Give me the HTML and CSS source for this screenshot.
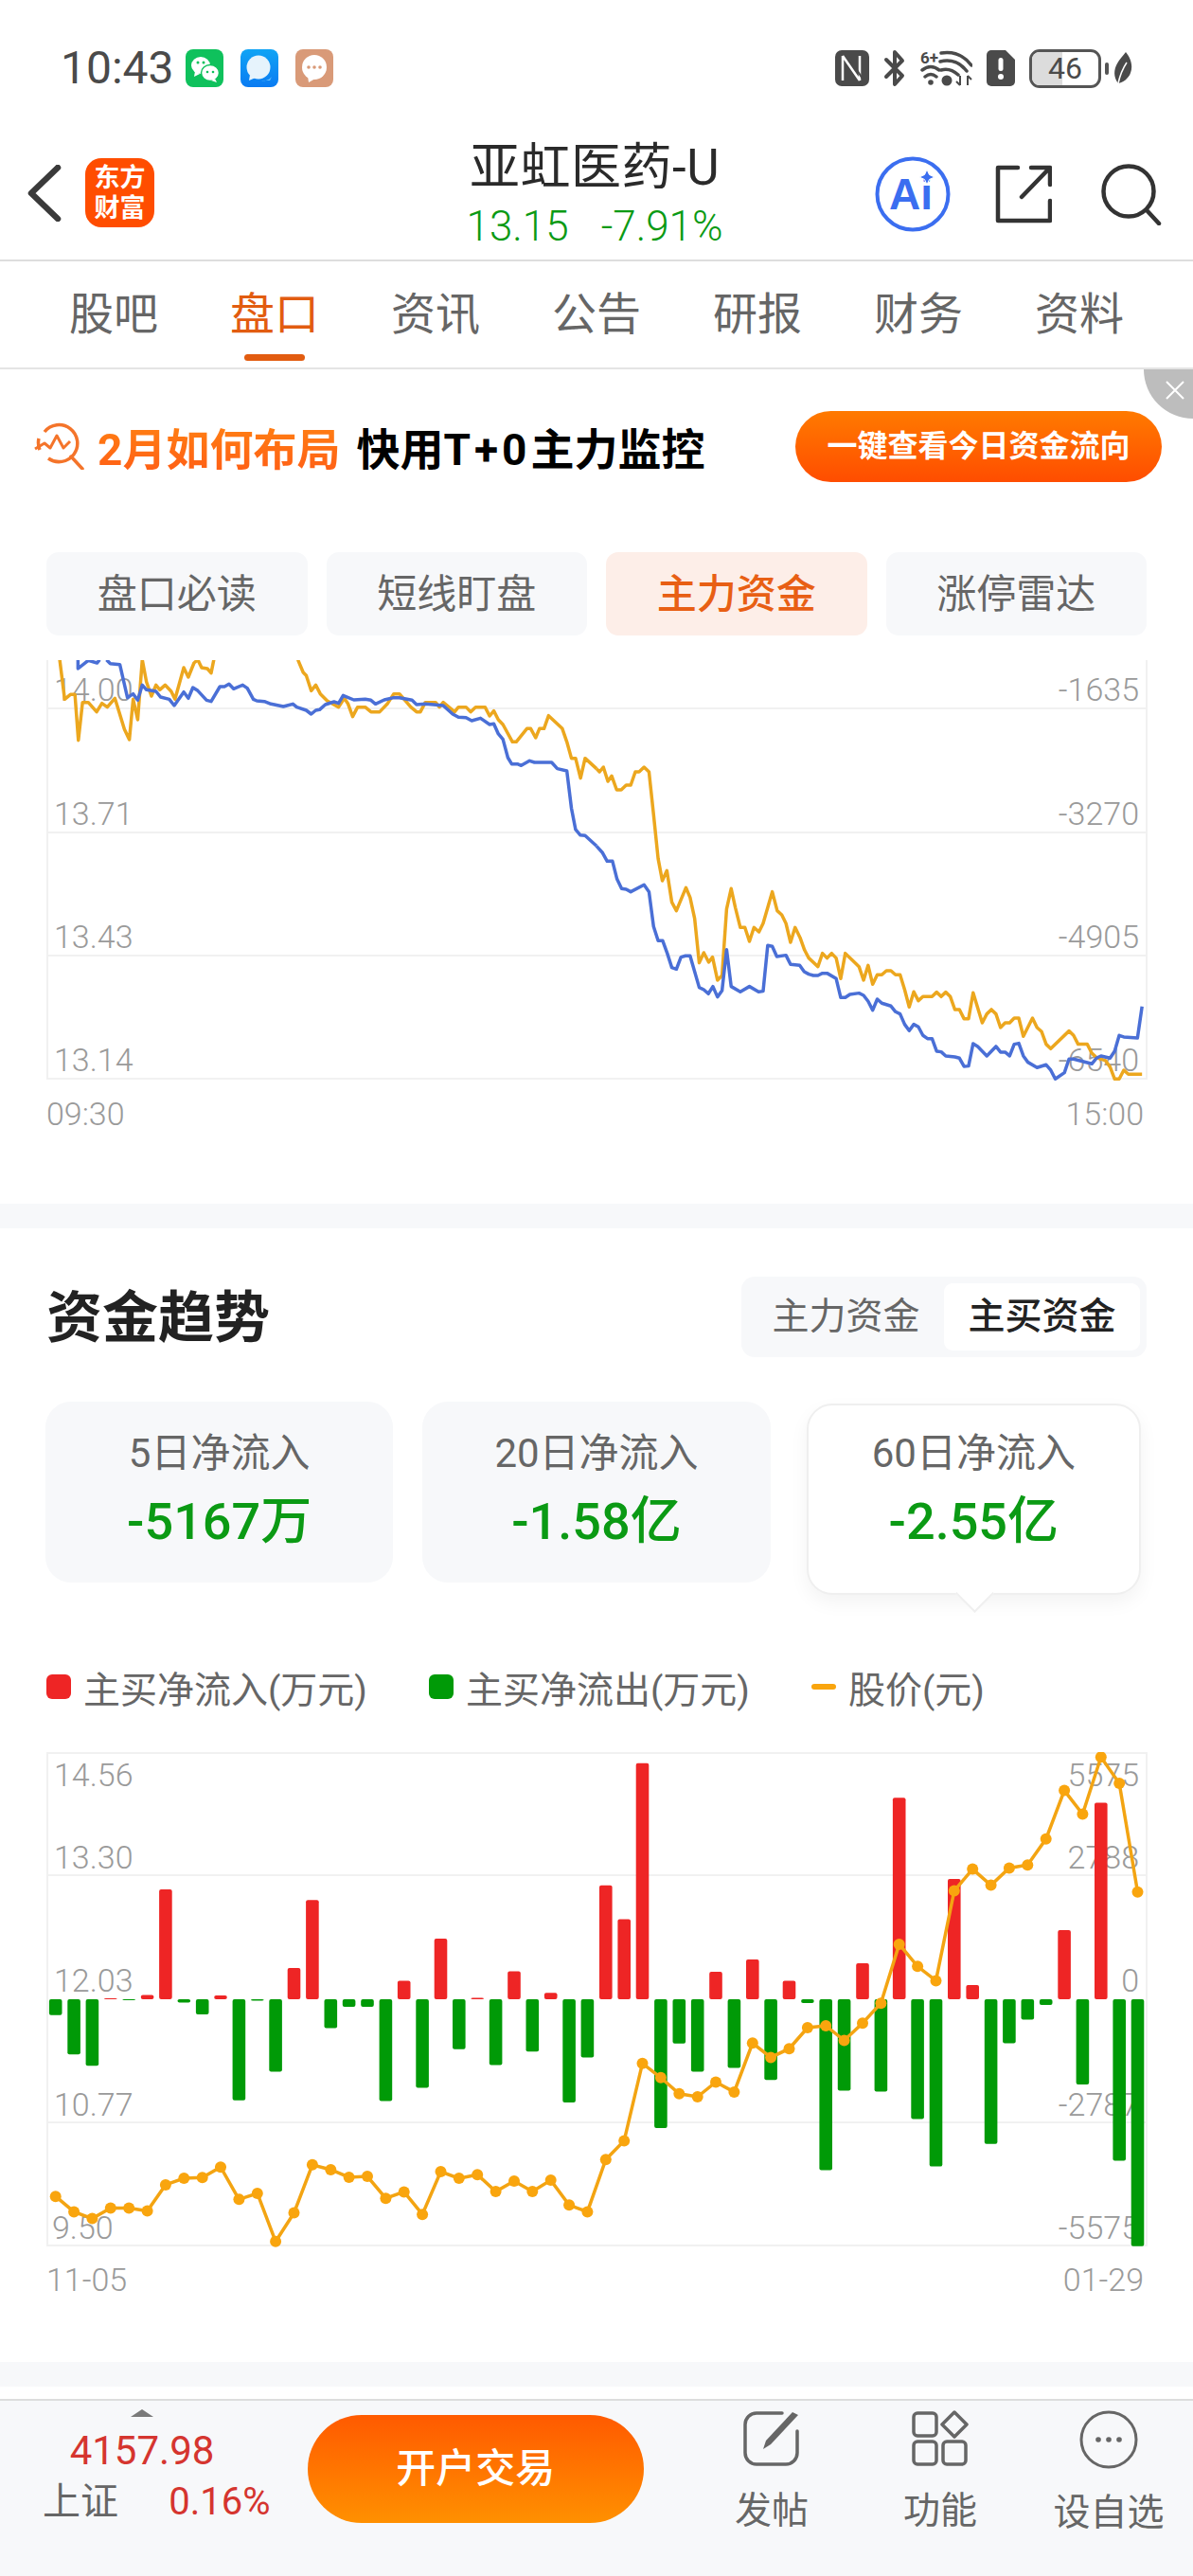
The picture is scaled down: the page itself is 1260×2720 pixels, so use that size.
FILE: index.html
```html
<!DOCTYPE html>
<html lang="zh-CN">
<head>
    <meta charset="UTF-8">
    <meta name="viewport" content="width=device-width, initial-scale=1.0">
    <title>亚虹医药-U</title>
    <link rel="stylesheet" href="styles.css">
</head>
<body>
    <div class="status">
        <div class="status-left">
            <span class="time">10:43</span>
            <svg class="app-icon" width="40" height="40" viewBox="0 0 40 40">
                <rect width="40" height="40" rx="8" fill="#0fc15c"/>
                <ellipse cx="16" cy="17" rx="10" ry="9" fill="#fff"/>
                <path d="M10 23l-1 6 6-3z" fill="#fff"/>
                <ellipse cx="26" cy="25" rx="9.500" ry="8.500" fill="#fff" stroke="#0fc15c" stroke-width="1.500"/>
                <path d="M31 31l2 4-6-2z" fill="#fff"/>
                <circle cx="13" cy="14" r="1.500" fill="#0fc15c"/><circle cx="19" cy="14" r="1.500" fill="#0fc15c"/>
                <circle cx="23" cy="24" r="1.300" fill="#0fc15c"/><circle cx="29" cy="24" r="1.300" fill="#0fc15c"/>
            </svg>
            <svg class="app-icon" width="40" height="40" viewBox="0 0 40 40">
                <defs><linearGradient id="msgBlue" x1="0" y1="0" x2="0" y2="1"><stop offset="0" stop-color="#10a4f5"/><stop offset="1" stop-color="#0a7bf2"/></linearGradient></defs>
                <rect width="40" height="40" rx="8" fill="url(#msgBlue)"/>
                <path d="M34 27c-2 5-7 7-12 6l9 0z" fill="#6cc4fa"/>
                <circle cx="19" cy="19" r="12.500" fill="#e6f3fc"/>
                <path d="M10 27l-1 6 7-3z" fill="#e6f3fc"/>
            </svg>
            <svg class="app-icon" width="40" height="40" viewBox="0 0 40 40">
                <rect width="40" height="40" rx="8" fill="#d99a78"/>
                <circle cx="20" cy="19" r="13" fill="#fff"/>
                <path d="M13 28l1 7 7-4z" fill="#fff"/>
                <circle cx="14" cy="19" r="1.800" fill="#d99a78"/><circle cx="20" cy="19" r="1.800" fill="#d99a78"/><circle cx="26" cy="19" r="1.800" fill="#d99a78"/>
            </svg>
        </div>
        <div class="status-right">
            <svg width="36" height="38" viewBox="0 0 36 38">
                <rect width="36" height="38" rx="7" fill="#4a4a4a"/>
                <path d="M8 6V32M8 6L26 32M26 32V6" fill="none" stroke="#fff" stroke-width="2.500"/>
                <path d="M14 6L30 32" fill="none" stroke="#4a4a4a" stroke-width="2"/>
            </svg>
            <svg width="24" height="40" viewBox="0 0 24 40">
                <path d="M3 11L20 28L12 37V3L20 12L3 29" fill="none" stroke="#4a4a4a" stroke-width="4" stroke-linejoin="round" stroke-linecap="round"/>
            </svg>
            <svg width="55" height="40" viewBox="0 0 55 40">
                <text class="wifi-six" x="0" y="15">6+</text>
                <path d="M22 4Q42 1 54 17M21 13Q38 9 49 23M22 22Q31 19 40 27M2 22Q11 15 20 22M5 29Q11 24 17 29" fill="none" stroke="#4a4a4a" stroke-width="3.500" stroke-linecap="round"/>
                <circle cx="11" cy="35" r="2.800" fill="#4a4a4a"/>
                <circle cx="28" cy="33" r="5.500" fill="#4a4a4a"/>
                <path d="M42 28V38M38 34L42 38M50 38V28M50 28L54 32" fill="none" stroke="#4a4a4a" stroke-width="2"/>
            </svg>
            <svg width="30" height="38" viewBox="0 0 30 38">
                <path d="M5 0H20L30 10V33a5 5 0 0 1-5 5H5a5 5 0 0 1-5-5V5a5 5 0 0 1 5-5z" fill="#4a4a4a"/>
                <rect x="12.500" y="8" width="5" height="14" rx="2.500" fill="#fff"/>
                <circle cx="15" cy="28" r="3" fill="#fff"/>
            </svg>
            <div class="battery">
                <div class="battery-body">
                    <div class="battery-fill"></div>
                    <span class="battery-num">46</span>
                </div>
                <div class="battery-tip"></div>
            </div>
            <svg width="20" height="34" viewBox="0 0 20 34">
                <path d="M13 0C18 6 21 14 18 22C16 28 10 32 5 33C0 27 0 19 4 12C6 8 10 4 13 0z" fill="#4a4a4a"/>
                <path d="M5 33C7 24 10 17 14 11" fill="none" stroke="#fff" stroke-width="1.500"/>
            </svg>
        </div>
    </div>

    <div class="nav">
        <div class="nav-left">
            <svg width="36" height="60" viewBox="0 0 36 60">
                <path d="M32 3L4 30L32 57" fill="none" stroke="#3a3a3a" stroke-width="6.500" stroke-linecap="round" stroke-linejoin="round"/>
            </svg>
            <div class="logo">东方<br>财富</div>
        </div>
        <div class="nav-title">
            <div class="stock-name">亚虹医药-U</div>
            <div class="stock-price"><span>13.15</span><span>-7.91%</span></div>
        </div>
        <div class="nav-right">
            <svg width="80" height="80" viewBox="0 0 80 80">
                <circle cx="40" cy="40" r="37.500" fill="none" stroke="#3b6ef0" stroke-width="4"/>
                <text class="ai-text" x="15" y="56">Ai</text>
                <path d="M55 14l2.500 5.500 5.500 2.500-5.500 2.500-2.500 5.500-2.500-5.500-5.500-2.500 5.500-2.500z" fill="#3b6ef0" stroke="#fff" stroke-width="1"/>
            </svg>
            <svg class="share" width="60" height="62" viewBox="0 0 60 62">
                <path d="M24 3H3V59H58V38M28 34L57 4M38 3H58V21" fill="none" stroke="#333" stroke-width="4.500" stroke-linecap="round" stroke-linejoin="round"/>
            </svg>
            <svg class="search" width="64" height="66" viewBox="0 0 64 66">
                <circle cx="29" cy="30" r="26.500" fill="none" stroke="#333" stroke-width="4.500"/>
                <path d="M49 51L61 64" fill="none" stroke="#333" stroke-width="4.500" stroke-linecap="round"/>
            </svg>
        </div>
    </div>

    <div class="tabs">
        <div class="tab">股吧</div>
        <div class="tab active">盘口</div>
        <div class="tab">资讯</div>
        <div class="tab">公告</div>
        <div class="tab">研报</div>
        <div class="tab">财务</div>
        <div class="tab">资料</div>
    </div>

    <div class="banner">
        <svg class="banner-icon" width="54" height="50" viewBox="0 0 54 50">
            <path d="M12 10A19.500 19.500 0 1 1 16 38M6 17A19.500 19.500 0 0 0 7 29" fill="none" stroke="#f4742a" stroke-width="3.500"/>
            <path d="M40 36L52 49" fill="none" stroke="#f4742a" stroke-width="3.500" stroke-linecap="round"/>
            <path d="M2 28L12 22L18 27L25 14L32 27L39 20" fill="none" stroke="#f4742a" stroke-width="3" stroke-linejoin="round"/>
        </svg>
        <span class="banner-hot">2月如何布局</span>
        <span class="banner-text">快用<span class="banner-code">T+0</span>主力监控</span>
        <div class="banner-btn">一键查看今日资金流向</div>
        <div class="banner-close">
            <svg width="22" height="22" viewBox="0 0 22 22">
                <path d="M2 2L20 20M20 2L2 20" stroke="#fff" stroke-width="2"/>
            </svg>
        </div>
    </div>

    <div class="segments">
        <div class="segment">盘口必读</div>
        <div class="segment">短线盯盘</div>
        <div class="segment active">主力资金</div>
        <div class="segment">涨停雷达</div>
    </div>

    <div class="chart chart-flow">
        <div class="axis axis-flow">
            <div class="axis-row"><span>14.00</span><span>-1635</span></div>
            <div class="axis-row"><span>13.71</span><span>-3270</span></div>
            <div class="axis-row"><span>13.43</span><span>-4905</span></div>
            <div class="axis-row"><span>13.14</span><span>-6540</span></div>
        </div>
        <svg class="plot" width="1260" height="444" viewBox="0 697 1260 444">
            <path class="grid" d="M50 697V1139M1211 697V1139M49 748H1212M49 879H1212M49 1009H1212M49 1139H1212"/>
            <!-- traced in two halves, each half has its own scale -->
            <g transform="translate(0 680) scale(.4018 .3333)">
                <polyline class="line-main" points="157,50 170,175 185,160 197,160 206,305 217,185 232,185 254,215 268,188 282,200 302,172 327,270 340,303 350,175 362,240 374,50 385,120 398,165 410,130 420,145 434,130 450,150 460,175 483,75 495,105 510,60 520,50 530,75 545,78 555,92 562,50"/>
                <polyline class="line-main" points="783,50 797,90 805,100 818,148 830,130 842,158 860,180 890,200 905,172 915,190 927,230 940,200 960,200 975,215 998,215 1018,190 1035,158 1050,158 1080,200 1095,215 1105,215 1118,185 1145,185 1155,200 1165,185 1195,215 1205,200 1225,200 1237,215 1250,200 1275,200 1287,228 1298,212 1310,240 1322,255 1347,310 1357,310 1385,268 1395,268 1408,297 1418,268 1430,268 1442,227 1478,268 1490,310 1502,362 1513,362 1526,425 1538,362 1568,395"/>
                <polyline class="line-price" points="205,50 205,78 232,52 255,60 262,50"/>
                <polyline class="line-price" points="280,50 290,62 315,65 335,170 350,158 362,178 374,130 385,145 410,150 422,168 445,175 458,195 483,152 495,172 507,138 520,148 543,178 555,182 578,135 590,135 602,127 614,142 638,130 650,140 666,175 675,180 695,182 712,190 745,198 770,190 780,200 805,210 818,222 830,210 840,208 855,192 878,183 890,188 902,163 930,177 960,175 975,178 987,190 1010,177 1035,170 1050,170 1083,178 1095,192 1118,190 1140,192 1165,195 1190,222 1205,232 1225,233 1240,243 1263,235 1287,255 1298,253 1310,285 1322,302 1335,360 1345,380 1360,380 1370,385 1392,370 1405,375 1450,375 1465,395 1490,402 1502,520 1513,588 1525,605 1538,607 1568,640"/>
            </g>
            <g transform="translate(630 680) scale(.4018 .3333)">
                <polyline class="line-main" points="0,395 8,405 18,390 30,435 40,418 53,462 65,462 78,447 90,447 102,405 112,405 125,390 138,405 150,540 162,680 173,750 185,718 198,818 210,845 235,772 246,803 258,870 270,1010 282,978 295,1008 305,992 318,1065 330,1050 342,840 354,775 365,835 378,898 390,898 402,942 414,898 427,912 438,885 462,785 475,845 487,858 498,885 510,945 522,898 535,930 547,970 558,995 582,1022 594,980 606,995 618,980 630,995 642,1060 654,980 690,1022 702,1065 714,1018 726,1078 738,1048 750,1048 762,1035 774,1035 786,1048 798,1048 810,1095 822,1150 834,1102 846,1130 858,1117 882,1117 894,1103 906,1117 918,1103 930,1117 942,1158 954,1158 966,1187 978,1187 990,1105 1014,1200 1026,1172 1038,1158 1050,1172 1062,1215 1074,1200 1086,1200 1098,1185 1110,1185 1122,1243 1146,1185 1158,1215 1170,1228 1182,1268 1194,1282 1242,1226 1254,1240 1266,1268 1290,1268 1302,1296 1314,1310 1338,1320 1350,1340 1362,1378 1374,1378 1386,1350 1398,1363 1434,1363"/>
                <polyline class="line-price" points="0,640 15,660 28,688 42,688 54,745 66,775 78,777 90,785 125,763 138,785 150,895 162,940 174,940 186,980 198,1025 210,1030 222,992 234,988 246,988 270,1088 282,1095 294,1108 306,1085 318,1118 330,1098 342,968 354,1085 378,1102 402,1085 426,1102 438,1100 450,955 462,958 474,990 498,986 510,1015 534,1018 546,1038 558,1046 570,1050 582,1050 594,1043 606,1043 630,1060 642,1120 654,1120 666,1110 690,1106 702,1113 714,1132 726,1160 738,1125 750,1138 774,1147 786,1165 798,1172 810,1205 822,1225 834,1205 846,1213 858,1240 870,1250 882,1250 894,1290 906,1292 918,1305 942,1308 954,1312 966,1338 978,1337 990,1266 1002,1275 1026,1305 1050,1275 1062,1293 1074,1293 1086,1305 1098,1268 1110,1265 1122,1305 1134,1325 1158,1342 1182,1333 1194,1350 1206,1378 1230,1358 1242,1315 1254,1315 1302,1330 1314,1312 1326,1305 1350,1312 1362,1290 1374,1240 1386,1245 1422,1248 1434,1148"/>
            </g>
        </svg>
    </div>
    <div class="x-axis x-axis-flow"><span>09:30</span><span>15:00</span></div>

    <div class="band band-first"></div>

    <div class="section-head">
        <h2>资金趋势</h2>
        <div class="toggle">
            <div class="toggle-item">主力资金</div>
            <div class="toggle-item active">主买资金</div>
        </div>
    </div>

    <div class="stats">
        <div class="stat">
            <div class="stat-label">5日净流入</div>
            <div class="stat-value">-5167万</div>
        </div>
        <div class="stat">
            <div class="stat-label">20日净流入</div>
            <div class="stat-value">-1.58亿</div>
        </div>
        <div class="stat selected">
            <div class="stat-label">60日净流入</div>
            <div class="stat-value">-2.55亿</div>
        </div>
    </div>

    <div class="legend">
        <span class="legend-item"><i class="swatch swatch-in"></i>主买净流入(万元)</span>
        <span class="legend-item"><i class="swatch swatch-out"></i>主买净流出(万元)</span>
        <span class="legend-item"><i class="swatch-line"></i>股价(元)</span>
    </div>

    <div class="chart chart-bars">
        <div class="axis axis-bars">
            <div class="axis-row"><span>14.56</span><span>5575</span></div>
            <div class="axis-row"><span>13.30</span><span>2788</span></div>
            <div class="axis-row"><span>12.03</span><span>0</span></div>
            <div class="axis-row"><span>10.77</span><span>-2787</span></div>
            <div class="axis-row"><span class="axis-short">9.50</span><span>-5575</span></div>
        </div>
        <svg class="plot" width="1260" height="524" viewBox="0 1850 1260 524">
            <defs>
                <marker id="dot" markerUnits="userSpaceOnUse" markerWidth="14" markerHeight="14" refX="7" refY="7">
                    <circle cx="7" cy="7" r="6" fill="#f9a50e"/>
                </marker>
            </defs>
            <path class="grid" d="M50 1851V2371M1211 1851V2371M49 1851H1212M49 1980H1212M49 2241H1212M49 2371H1212"/>
            <g class="bars-down">
                <rect x="51.900" y="2111" width="13.600" height="16.700"/>
                <rect x="71.300" y="2111" width="13.600" height="58.300"/>
                <rect x="90.600" y="2111" width="13.600" height="70.200"/>
                <rect x="129.400" y="2111" width="13.600" height="1"/>
                <rect x="187.500" y="2111" width="13.600" height="3.600"/>
                <rect x="206.900" y="2111" width="13.600" height="15.900"/>
                <rect x="245.600" y="2111" width="13.600" height="106.700"/>
                <rect x="265" y="2111" width="13.600" height="1.600"/>
                <rect x="284.300" y="2111" width="13.600" height="76.600"/>
                <rect x="342.500" y="2111" width="13.600" height="30.600"/>
                <rect x="361.800" y="2111" width="13.600" height="7.900"/>
                <rect x="381.200" y="2111" width="13.600" height="7.900"/>
                <rect x="400.600" y="2111" width="13.600" height="107.500"/>
                <rect x="439.300" y="2111" width="13.600" height="93.600"/>
                <rect x="478" y="2111" width="13.600" height="52.800"/>
                <rect x="516.800" y="2111" width="13.600" height="69.400"/>
                <rect x="555.500" y="2111" width="13.600" height="55.200"/>
                <rect x="594.300" y="2111" width="13.600" height="109.100"/>
                <rect x="613.600" y="2111" width="13.600" height="61.500"/>
                <rect x="691.100" y="2111" width="13.600" height="136.100"/>
                <rect x="710.500" y="2111" width="13.600" height="46.800"/>
                <rect x="729.900" y="2111" width="13.600" height="76.600"/>
                <rect x="768.600" y="2111" width="13.600" height="72.600"/>
                <rect x="807.300" y="2111" width="13.600" height="85.300"/>
                <rect x="846.100" y="2111" width="13.600" height="4"/>
                <rect x="865.400" y="2111" width="13.600" height="180.500"/>
                <rect x="884.800" y="2111" width="13.600" height="96.400"/>
                <rect x="923.600" y="2111" width="13.600" height="97.600"/>
                <rect x="962.300" y="2111" width="13.600" height="126.600"/>
                <rect x="981.700" y="2111" width="13.600" height="176.600"/>
                <rect x="1039.800" y="2111" width="13.600" height="152.800"/>
                <rect x="1059.100" y="2111" width="13.600" height="46.400"/>
                <rect x="1078.500" y="2111" width="13.600" height="21.400"/>
                <rect x="1097.900" y="2111" width="13.600" height="6"/>
                <rect x="1136.600" y="2111" width="13.600" height="90.100"/>
                <rect x="1175.400" y="2111" width="13.600" height="170.600"/>
                <rect x="1194.700" y="2111" width="13.600" height="260.700"/>
            </g>
            <g class="bars-up">
                <rect x="110" y="2110" width="13.600" height="1"/>
                <rect x="148.800" y="2106.600" width="13.600" height="4.400"/>
                <rect x="168.100" y="1995.100" width="13.600" height="115.900"/>
                <rect x="226.200" y="2107" width="13.600" height="4"/>
                <rect x="303.700" y="2078.100" width="13.600" height="32.900"/>
                <rect x="323.100" y="2006.200" width="13.600" height="104.800"/>
                <rect x="419.900" y="2091.600" width="13.600" height="19.400"/>
                <rect x="458.700" y="2047.100" width="13.600" height="63.900"/>
                <rect x="497.400" y="2109.400" width="13.600" height="1.600"/>
                <rect x="536.200" y="2081.600" width="13.600" height="29.400"/>
                <rect x="574.900" y="2104.300" width="13.600" height="6.700"/>
                <rect x="633" y="1990.800" width="13.600" height="120.200"/>
                <rect x="652.400" y="2026.500" width="13.600" height="84.500"/>
                <rect x="671.700" y="1861.800" width="13.600" height="249.200"/>
                <rect x="749.200" y="2082" width="13.600" height="29"/>
                <rect x="788" y="2068.900" width="13.600" height="42.100"/>
                <rect x="826.700" y="2091.600" width="13.600" height="19.400"/>
                <rect x="904.200" y="2072.900" width="13.600" height="38.100"/>
                <rect x="942.900" y="1898.300" width="13.600" height="212.700"/>
                <rect x="1001" y="1984" width="13.600" height="127"/>
                <rect x="1020.400" y="2095.900" width="13.600" height="15.100"/>
                <rect x="1117.300" y="2038" width="13.600" height="73"/>
                <rect x="1156" y="1903.500" width="13.600" height="207.500"/>
            </g>
            <polyline class="line-dots" points="58.700,2319.200 78.100,2335.400 97.400,2342.600 116.800,2331.500 136.200,2331.500 155.600,2334.600 174.900,2306.900 194.300,2300.100 213.700,2299.300 233,2288.200 252.400,2322.300 271.800,2316 291.100,2366.800 310.500,2336.600 329.900,2285.800 349.300,2291 368.600,2298.900 388,2298.100 407.400,2321.200 426.700,2314.400 446.100,2338.200 465.500,2293 484.800,2300.100 504.200,2296.200 523.600,2314 543,2302.900 562.300,2314 581.700,2302.100 601.100,2328.300 620.400,2335.400 639.800,2280.300 659.200,2260.400 678.500,2178.700 697.900,2193.800 717.300,2210.800 736.700,2214 756,2198.500 775.400,2208.900 794.800,2157.300 814.100,2172.400 833.500,2163.200 852.900,2141 872.200,2139 891.600,2154.500 911,2136.300 930.400,2115.200 949.700,2052.900 969.100,2076.300 988.500,2091.400 1007.800,1996.600 1027.200,1973.600 1046.600,1990.600 1065.900,1972.400 1085.300,1969.200 1104.700,1941.800 1124.100,1890.600 1143.400,1915.600 1162.800,1855.300 1182.200,1883.100 1201.500,1997.800"/>
        </svg>
    </div>
    <div class="x-axis x-axis-bars"><span>11-05</span><span>01-29</span></div>

    <div class="band band-last"></div>

    <div class="footer">
        <div class="index">
            <div class="index-top">
                <div class="index-arrow"></div>
                <div class="index-value">4157.98</div>
            </div>
            <div class="index-row"><span class="index-name">上证</span><span class="index-pct">0.16%</span></div>
        </div>
        <div class="trade-btn">开户交易</div>
        <div class="actions">
            <div class="action">
                <svg width="62" height="60" viewBox="0 0 62 60">
                    <path d="M42 3H15A12 12 0 0 0 3 15V45A12 12 0 0 0 15 57H46A12 12 0 0 0 58 45V22" fill="none" stroke="#666" stroke-width="3.500" stroke-linecap="round"/>
                    <path d="M53 2L59 5L30 36L22 41L25 32z" fill="#666"/>
                </svg>
                <span>发帖</span>
            </div>
            <div class="action">
                <svg width="60" height="60" viewBox="0 0 60 60">
                    <g fill="none" stroke="#666" stroke-width="3.500" stroke-linejoin="round">
                        <rect x="2" y="3" width="24" height="24" rx="4"/>
                        <rect x="2" y="33" width="24" height="24" rx="4"/>
                        <rect x="33" y="33" width="24" height="24" rx="4"/>
                        <path d="M45 2L58 15L45 28L32 15z"/>
                    </g>
                </svg>
                <span>功能</span>
            </div>
            <div class="action">
                <svg width="62" height="62" viewBox="0 0 62 62">
                    <circle cx="31" cy="31" r="29" fill="none" stroke="#666" stroke-width="3"/>
                    <circle cx="20" cy="31" r="2.800" fill="#666"/><circle cx="31" cy="31" r="2.800" fill="#666"/><circle cx="42" cy="31" r="2.800" fill="#666"/>
                </svg>
                <span>设自选</span>
            </div>
        </div>
    </div>
</body>
</html>
```

FILE: styles.css
```css
:root {
    --bg-soft: #f7f8fa;
    --text: #222222;
    --text-soft: #666666;
    --axis: #9a9a9a;
    --orange: #e25c10;
    --green: #0b9a14;
    --red: #d5352f;
}
* {
    box-sizing: border-box;
}
body {
    margin: 0;
    width: 1260px;
    height: 2720px;
    overflow: hidden;
    background: #fff;
    color: var(--text);
    font-family: Roboto, "Noto Sans CJK SC", sans-serif;
}

/* status bar */
.status {
    height: 130px;
    padding: 52px 64px 0;
    display: flex;
    justify-content: space-between;
    align-items: flex-start;
}
.status-left, .status-right {
    display: flex;
    align-items: center;
    height: 40px;
}
.time {
    font-size: 48px;
    line-height: 40px;
    color: #4a4a4a;
    width: 132px;
}
.app-icon {
    margin-right: 18px;
}
.status-right {
    gap: 15px;
}
.wifi-six {
    font-size: 17px;
    font-weight: 700;
    fill: #4a4a4a;
}
.battery {
    display: flex;
    align-items: center;
    gap: 4px;
    margin-right: -10px;
}
.battery-body {
    position: relative;
    width: 76px;
    height: 41px;
    border: 3px solid #555;
    border-radius: 11px;
    overflow: hidden;
    text-align: center;
}
.battery-fill {
    position: absolute;
    left: 0;
    top: 0;
    bottom: 0;
    width: 46%;
    background: #dcdcdc;
}
.battery-num {
    position: relative;
    font-size: 32px;
    line-height: 35px;
    color: #4a4a4a;
}
.battery-tip {
    width: 4px;
    height: 13px;
    border-radius: 2px;
    background: #555;
}

/* navigation */
.nav {
    height: 146px;
    border-bottom: 2px solid #dddddd;
    display: grid;
    grid-template-columns: 1fr auto 1fr;
    align-items: center;
    padding: 0 33px 0 29px;
}
.nav-left {
    display: flex;
    align-items: center;
    gap: 25px;
    margin-top: 3px;
}
.logo {
    width: 73px;
    height: 73px;
    border-radius: 17px;
    background: #ff4d00;
    color: #fff;
    font-size: 27px;
    font-weight: 700;
    line-height: 32px;
    text-align: center;
    padding-top: 5px;
}
.nav-title {
    text-align: center;
    margin-top: 3px;
}
.stock-name {
    font-size: 53px;
    line-height: 62px;
    letter-spacing: 0.5px;
    color: #2a2a2a;
}
.stock-price {
    margin-top: 8px;
    font-size: 44px;
    line-height: 46px;
    color: var(--green);
    display: flex;
    justify-content: center;
    gap: 34px;
    font-weight: 300;
}
.nav-right {
    display: flex;
    justify-content: flex-end;
    align-items: center;
    margin-top: 5px;
}
.ai-text {
    font-size: 46px;
    font-weight: 700;
    font-family: "Liberation Sans", sans-serif;
    fill: #3b6ef0;
}
.share {
    margin-left: 47px;
}
.search {
    margin-left: 52px;
}

/* main tabs */
.tabs {
    height: 114px;
    padding: 0 35px;
    display: flex;
    border-bottom: 2px solid #e4e4e4;
}
.tab {
    flex: 1;
    position: relative;
    text-align: center;
    font-size: 47px;
    line-height: 112px;
    color: var(--text-soft);
}
.tab.active {
    color: var(--orange);
}
.tab.active::after {
    content: "";
    position: absolute;
    left: 50%;
    bottom: 7px;
    width: 64px;
    height: 7px;
    margin-left: -32px;
    border-radius: 4px;
    background: var(--orange);
}

/* banner */
.banner {
    position: relative;
    height: 162px;
    padding: 0 33px 0 35px;
    display: flex;
    align-items: center;
}
.banner-hot {
    margin-left: 14px;
    font-size: 46px;
    font-weight: 700;
    background: linear-gradient(180deg, #ff8512, #ff5c16);
    -webkit-background-clip: text;
    background-clip: text;
    color: transparent;
}
.banner-text {
    margin-left: 17px;
    font-size: 46px;
    font-weight: 700;
    color: #000;
}
.banner-code {
    letter-spacing: 4px;
}
.banner-btn {
    margin-left: auto;
    width: 387px;
    height: 75px;
    border-radius: 38px;
    background: linear-gradient(180deg, #ff7a00, #ff4d00);
    color: #fff;
    font-size: 32px;
    font-weight: 700;
    line-height: 75px;
    text-align: center;
}
.banner-close {
    position: absolute;
    top: 0;
    right: 0;
    width: 52px;
    height: 52px;
    background: #bdbdbd;
    border-bottom-left-radius: 52px;
    padding: 11px 0 0 22px;
}
.banner-close svg {
    display: block;
}

/* segments */
.segments {
    margin: 31px 49px 0;
    display: flex;
    gap: 20px;
}
.segment {
    flex: 1;
    height: 88px;
    border-radius: 13px;
    background: var(--bg-soft);
    color: var(--text-soft);
    font-size: 42px;
    line-height: 90px;
    text-align: center;
}
.segment.active {
    background: #fdeee8;
    color: #e85f14;
    font-weight: 500;
}

/* charts */
.chart {
    position: relative;
}
.chart-flow {
    margin-top: 26px;
    height: 444px;
}
.plot {
    position: relative;
    display: block;
}
.grid {
    fill: none;
    stroke: #f1f1f1;
    stroke-width: 2;
}
.axis {
    position: absolute;
    left: 57px;
    right: 57px;
    top: 0;
    display: grid;
    font-size: 34px;
    font-weight: 300;
    line-height: 38px;
    color: var(--axis);
}
.axis-flow {
    grid-template-rows: 50px 131px 130px 130px;
}
.axis-bars {
    grid-template-rows: 43px 87px 130px 131px 130px;
}
.axis-row {
    display: flex;
    justify-content: space-between;
    align-items: flex-end;
}
.axis-short {
    margin-left: -2px;
}
.line-main, .line-price {
    fill: none;
    stroke-width: 3.500;
    stroke-linejoin: round;
    vector-effect: non-scaling-stroke;
}
.line-main {
    stroke: #eca71e;
}
.line-price {
    stroke: #4a6fd6;
}
.x-axis {
    display: flex;
    justify-content: space-between;
    padding: 0 52px 0 49px;
    font-size: 34px;
    font-weight: 300;
    line-height: 40px;
    color: var(--axis);
}
.x-axis-flow {
    margin-top: 15px;
}
.bars-up {
    fill: #ee2525;
}
.bars-down {
    fill: #009a07;
}
.bars-up rect, .bars-down rect {
    rx: 2px;
}
.line-dots {
    fill: none;
    stroke: #f3a412;
    stroke-width: 3.500;
    marker-start: url(#dot);
    marker-mid: url(#dot);
    marker-end: url(#dot);
}

.band {
    height: 26px;
    background: var(--bg-soft);
}
.band-first {
    margin-top: 75px;
}
.band-last {
    margin-top: 67px;
}

/* fund trend */
.section-head {
    margin-top: 51px;
    padding: 0 49px;
    height: 85px;
    display: flex;
    justify-content: space-between;
    align-items: center;
}
.section-head h2 {
    margin: -8px 0 0;
    font-size: 59px;
    font-weight: 700;
    color: #222;
    letter-spacing: 0;
}
.toggle {
    height: 85px;
    padding: 7px;
    border-radius: 14px;
    background: var(--bg-soft);
    display: flex;
}
.toggle-item {
    width: 207px;
    font-size: 39px;
    line-height: 71px;
    text-align: center;
    color: var(--text-soft);
}
.toggle-item.active {
    background: #fff;
    border-radius: 9px;
    color: #222;
    font-weight: 500;
}
.stats {
    margin-top: 47px;
    padding: 0 48px;
    display: grid;
    grid-template-columns: repeat(3, 1fr);
    gap: 31px;
}
.stat {
    height: 191px;
    border-radius: 27px;
    background: var(--bg-soft);
    text-align: center;
    padding-top: 29px;
}
.stat-label {
    font-size: 42px;
    line-height: 52px;
    color: var(--text-soft);
}
.stat-value {
    margin-top: 13px;
    font-size: 54px;
    line-height: 66px;
    font-weight: 500;
    color: var(--green);
}
.stat.selected {
    position: relative;
    height: 202px;
    margin: 2px 7px 0;
    background: #fff;
    border: 2px solid #efefef;
    box-shadow: 0 8px 20px rgba(0, 0, 0, 0.05);
    padding-top: 25px;
}
.stat.selected::after {
    content: "";
    position: absolute;
    left: 50%;
    bottom: -15px;
    width: 27px;
    height: 27px;
    margin-left: -13px;
    background: #fff;
    border-right: 2px solid #efefef;
    border-bottom: 2px solid #efefef;
    transform: rotate(45deg);
}
.legend {
    margin-top: 77px;
    padding: 0 49px;
    display: flex;
    align-items: center;
    height: 40px;
    font-size: 39px;
    color: var(--text-soft);
}
.legend-item {
    display: flex;
    align-items: center;
}
.legend-item + .legend-item {
    margin-left: 65px;
}
.swatch {
    width: 26px;
    height: 26px;
    border-radius: 6px;
    margin-right: 13px;
}
.swatch-in {
    background: #ee2525;
}
.swatch-out {
    background: #009a07;
}
.swatch-line {
    width: 26px;
    height: 6px;
    border-radius: 3px;
    margin-right: 13px;
    background: #f9a50e;
}
.chart-bars {
    margin-top: 49px;
    height: 524px;
}
.x-axis-bars {
    margin-top: 13px;
}

/* bottom bar */
.footer {
    margin-top: 13px;
    height: 187px;
    border-top: 2px solid #dddddd;
    background: var(--bg-soft);
    display: flex;
    overflow: hidden;
}
.index {
    margin-left: 45px;
    width: 241px;
    padding-top: 9px;
}
.index-top {
    width: 210px;
    text-align: center;
}
.index-arrow {
    width: 0;
    height: 0;
    margin: 0 auto;
    border-left: 12px solid transparent;
    border-right: 12px solid transparent;
    border-bottom: 8px solid #7a7a7a;
}
.index-value {
    margin-top: 12px;
    font-size: 42px;
    line-height: 48px;
    color: var(--red);
}
.index-row {
    margin-top: 8px;
    display: flex;
    justify-content: space-between;
    align-items: center;
    line-height: 44px;
}
.index-name {
    font-size: 40px;
    color: var(--text-soft);
}
.index-pct {
    font-size: 40px;
    color: var(--red);
}
.trade-btn {
    margin: 15px 0 0 39px;
    width: 356px;
    height: 114px;
    border-radius: 57px;
    background: linear-gradient(180deg, #ff5a00, #ff9000);
    color: #fff;
    font-size: 42px;
    font-weight: 500;
    line-height: 114px;
    text-align: center;
}
.actions {
    margin-left: 46px;
    display: flex;
}
.action {
    width: 178px;
    padding-top: 10px;
    display: flex;
    flex-direction: column;
    align-items: center;
    font-size: 39px;
    line-height: 50px;
    color: var(--text-soft);
}
.action span {
    margin-top: 21px;
}
```
